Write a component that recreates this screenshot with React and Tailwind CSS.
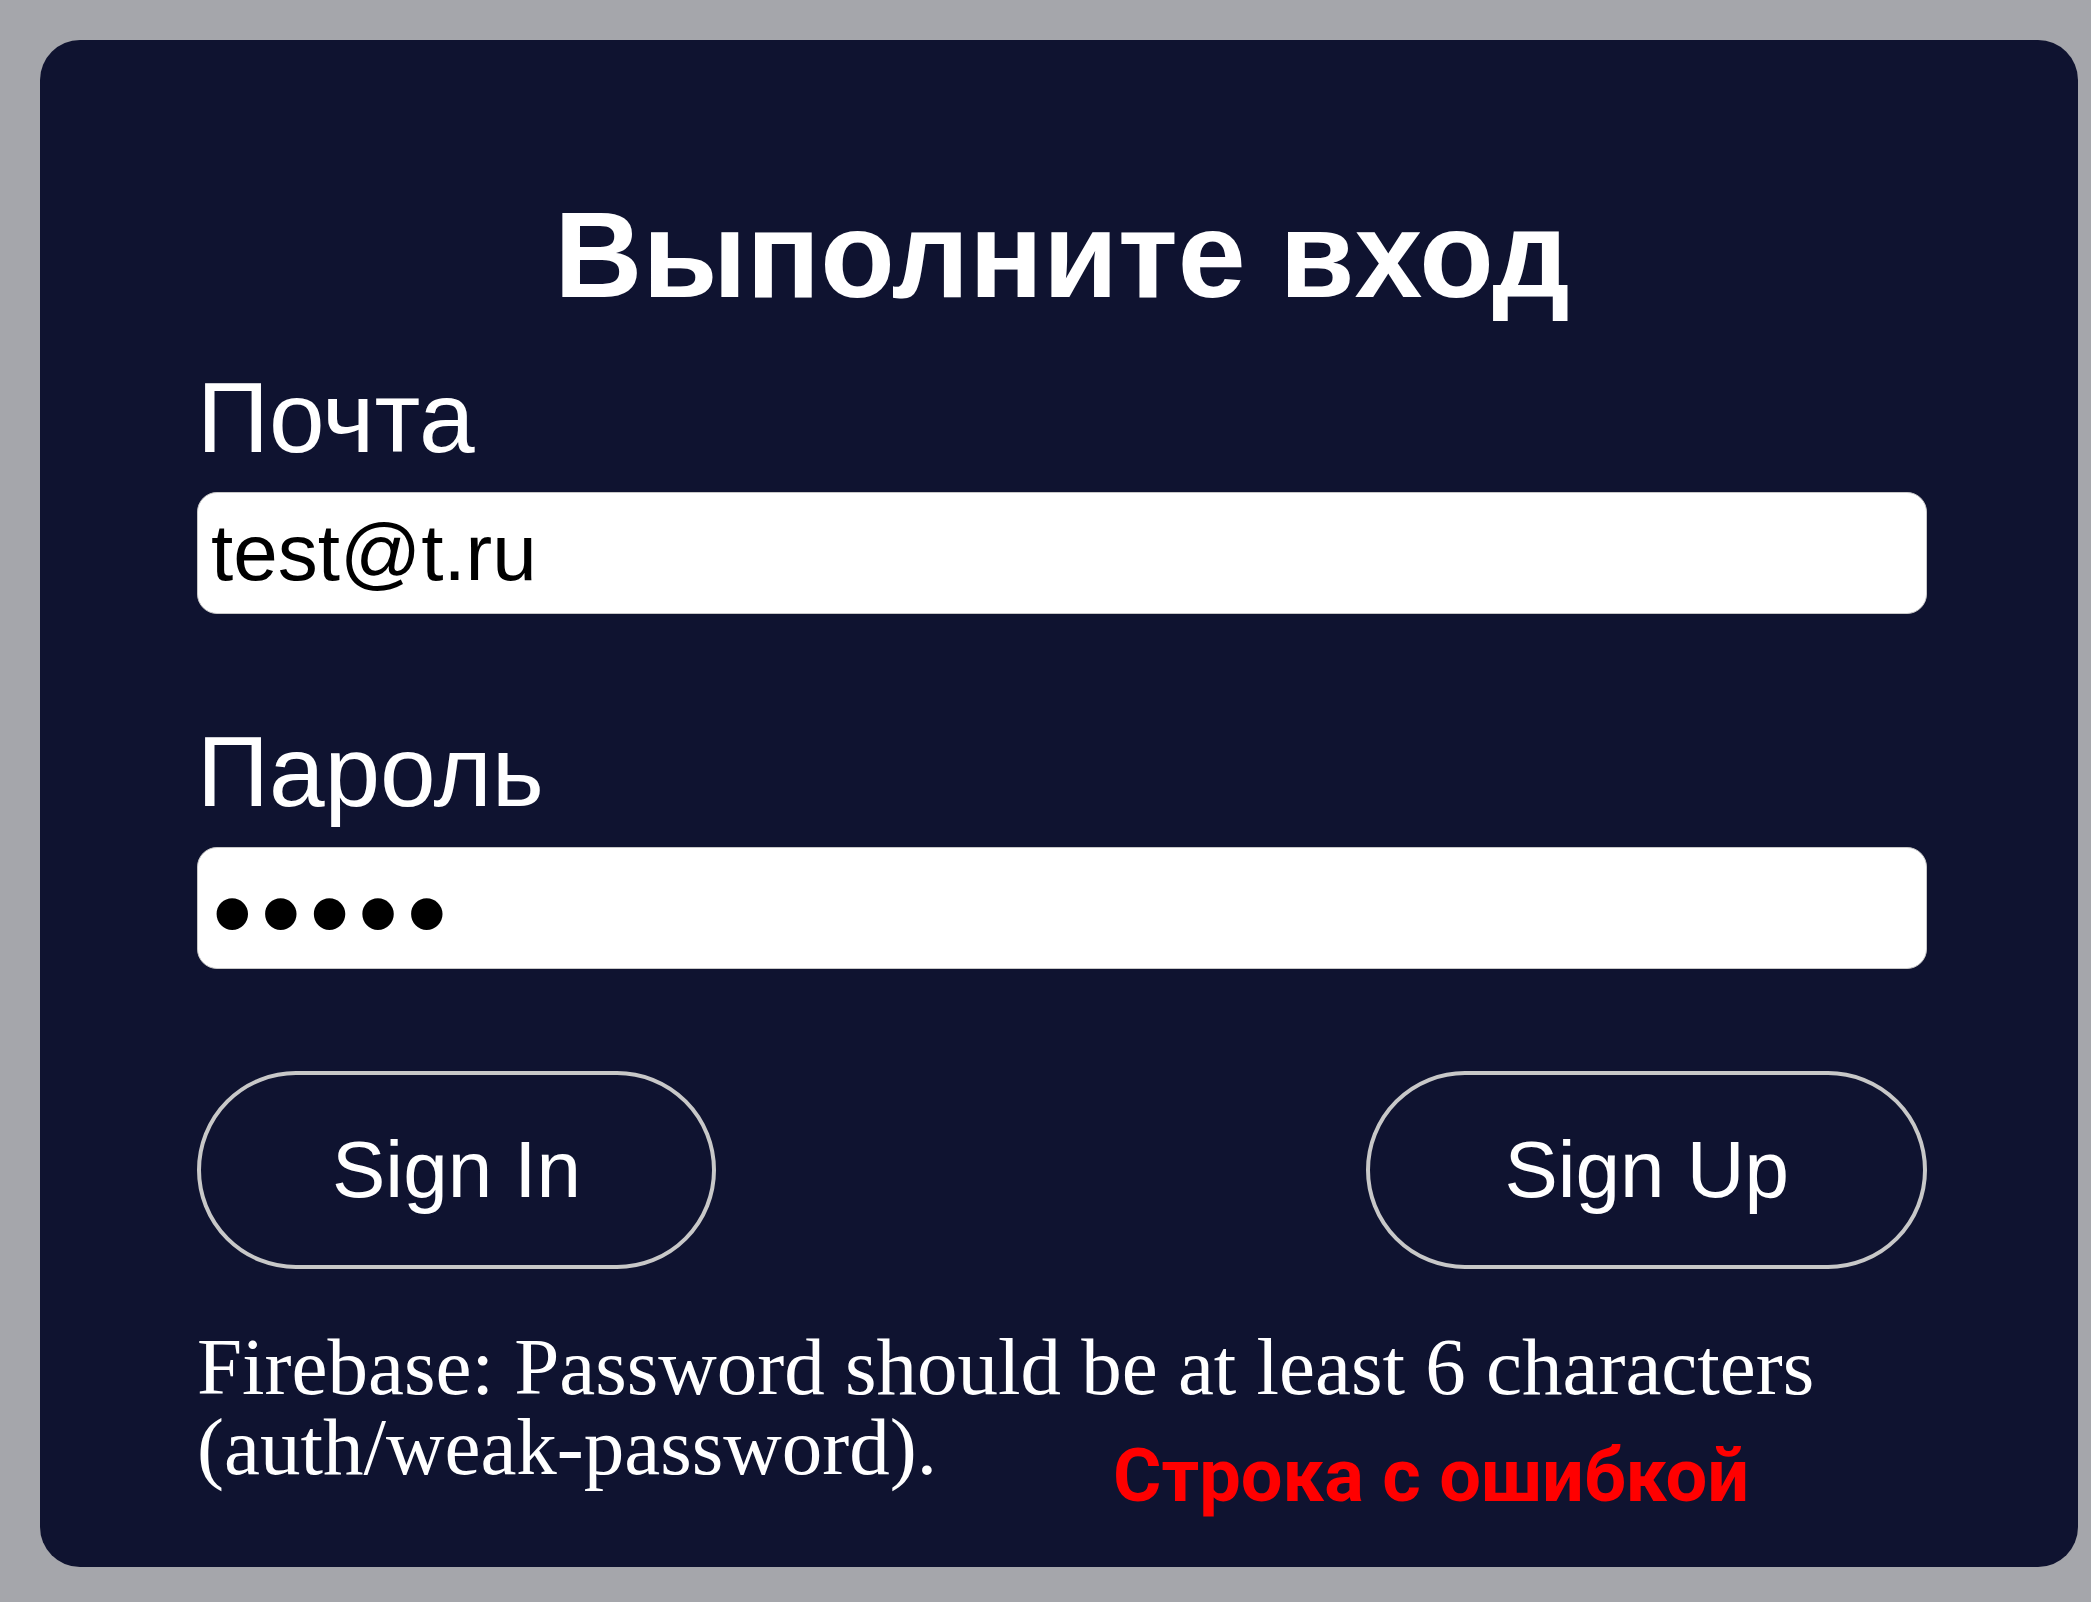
import React from "react";

export default function App() {
  return (
    <div className="min-h-[1602px] w-full bg-[#a5a6ab] pt-[40px] pl-[40px]">
      <div className="relative w-[2038px] h-[1527px] rounded-[40px] bg-[#0f1330] pl-[157px] pr-[151px] pt-[145px]">
        <h1
          className="text-center text-white font-bold text-[122px] leading-[140px]"
          style={{ fontFamily: '"Liberation Sans", Arial, sans-serif' }}
        >
          Выполните вход
        </h1>
        <form
          className="flex flex-col"
          style={{ fontFamily: '"Liberation Sans", Arial, sans-serif' }}
          onSubmit={(e) => e.preventDefault()}
        >
          <label className="mt-[35px] text-white text-[100px] leading-[115px]">Почта</label>
          <input
            type="email"
            defaultValue="test@t.ru"
            className="mt-[17px] h-[122px] w-full rounded-[20px] border border-[#c8c8c8] bg-white px-[13px] text-[80px] text-black outline-none"
          />
          <label className="mt-[100px] text-white text-[100px] leading-[115px]">Пароль</label>
          <input
            type="password"
            defaultValue="12345"
            className="mt-[18px] h-[122px] w-full rounded-[20px] border border-[#c8c8c8] bg-white px-[14px] pt-[10px] pb-0 text-[116px] tracking-[8px] text-black outline-none"
          />
          <div className="mt-[102px] flex justify-between">
            <button
              type="button"
              className="rounded-full border-[4px] border-[#c8c8c8] bg-transparent px-[131px] py-[49px] text-[80px] leading-[92px] text-white"
            >
              Sign In
            </button>
            <button
              type="button"
              className="rounded-full border-[4px] border-[#c8c8c8] bg-transparent px-[134px] py-[49px] text-[80px] leading-[92px] text-white"
            >
              Sign Up
            </button>
          </div>
        </form>
        <p
          className="mt-[58px] text-white text-[81px] leading-[80px]"
          style={{ fontFamily: '"Liberation Serif", "Times New Roman", serif' }}
        >
          Firebase: Password should be at least 6 characters (auth/weak-password).
        </p>
        <div
          className="absolute left-[1073px] top-[1394px] text-[#ff0000] font-bold text-[74px] leading-[84px]"
          style={{ fontFamily: 'Roboto, "Noto Sans", sans-serif' }}
        >
          Строка с ошибкой
        </div>
      </div>
    </div>
  );
}
